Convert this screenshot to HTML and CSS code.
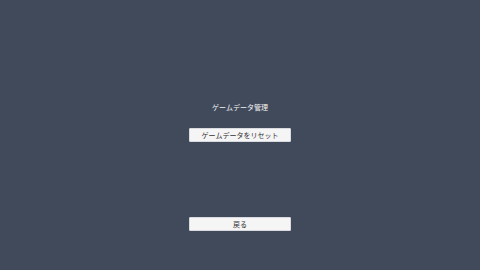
FILE: index.html
```html
<!DOCTYPE html>
<html lang="ja">
<head>
<meta charset="utf-8">
<link rel="stylesheet" href="styles.css">
</head>
<body>
<main class="screen">
  <h1 class="title">ゲームデータ管理</h1>
  <button class="btn">ゲームデータをリセット</button>
  <button class="btn back">戻る</button>
</main>
</body>
</html>
```
FILE: styles.css
```css
html, body {
  margin: 0;
  padding: 0;
  width: 480px;
  height: 270px;
  background: #414a5b;
  overflow: hidden;
  font-family: "Noto Sans CJK JP", "Noto Sans", sans-serif;
}
.screen {
  display: flex;
  flex-direction: column;
  align-items: center;
  padding-top: 101px;
}
.title {
  margin: 0;
  font-size: 7px;
  line-height: 13px;
  font-weight: normal;
  color: #f2f2f2;
}
.btn {
  margin-top: 14px;
  width: 102px;
  height: 14px;
  padding: 0;
  border: 1px solid #d8dadf;
  border-radius: 1px;
  background: #f5f5f5;
  color: #333;
  font-family: inherit;
  font-size: 7px;
  line-height: 12px;
}
.back {
  margin-top: 75px;
}
```
